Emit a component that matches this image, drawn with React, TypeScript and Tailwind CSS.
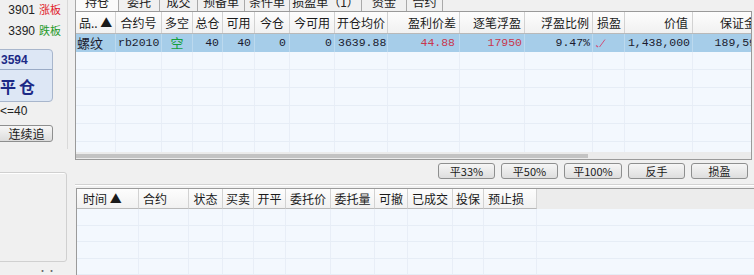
import React from "react";

const cjk = "font-['Noto_Sans_CJK_SC','Noto_Sans',sans-serif]";
const mono = "font-['Liberation_Mono','DejaVu_Sans_Mono',monospace]";

const tabs = [
  { t: "持仓", w: 44, on: true },
  { t: "委托", w: 41 },
  { t: "成交", w: 38 },
  { t: "预备单", w: 47 },
  { t: "条件单", w: 45 },
  { t: "损盈单（1）", w: 72 },
  { t: "资金", w: 45 },
  { t: "合约", w: 36 },
];

// upper grid columns: title, width, header align, cell align
const upperCols = [
  { t: "品.. ▲", w: 40, h: "justify-start pl-[3px]", c: "justify-start pl-[1px]" },
  { t: "合约号", w: 46, h: "justify-center", c: "justify-start pl-[2px]" },
  { t: "多空", w: 31, h: "justify-center", c: "justify-center" },
  { t: "总仓", w: 30, h: "justify-center", c: "justify-end pr-[3px]" },
  { t: "可用", w: 32, h: "justify-center", c: "justify-end pr-[3px]" },
  { t: "今仓", w: 35, h: "justify-center", c: "justify-end pr-[3px]" },
  { t: "今可用", w: 45, h: "justify-center", c: "justify-end pr-[2px]" },
  { t: "开仓均价", w: 53, h: "justify-center", c: "justify-start pl-[3px]" },
  { t: "盈利价差", w: 72, h: "justify-end pr-[3px]", c: "justify-end pr-[4px]" },
  { t: "逐笔浮盈", w: 65, h: "justify-end pr-[3px]", c: "justify-end pr-[2px]" },
  { t: "浮盈比例", w: 68, h: "justify-end pr-[3px]", c: "justify-end pr-[2px]" },
  { t: "损盈", w: 32, h: "justify-start pl-[4px]", c: "justify-start pl-[2px]" },
  { t: "价值", w: 68, h: "justify-end pr-[4px]", c: "justify-end pr-[2px]" },
  { t: "保证金", w: 70, h: "justify-end pr-[6px]", c: "justify-end pr-[6px]" },
];

const lowerCols = [
  { t: "时间 ▲", w: 62, a: "justify-start pl-[6px]" },
  { t: "合约", w: 50, a: "justify-start pl-[4px]" },
  { t: "状态", w: 34, a: "justify-center" },
  { t: "买卖", w: 31, a: "justify-center" },
  { t: "开平", w: 32, a: "justify-center" },
  { t: "委托价", w: 45, a: "justify-center" },
  { t: "委托量", w: 44, a: "justify-center" },
  { t: "可撤", w: 33, a: "justify-center" },
  { t: "已成交", w: 45, a: "justify-center" },
  { t: "投保", w: 31, a: "justify-center" },
  { t: "预止损", w: 53, a: "justify-start pl-[4px]" },
];

function Check() {
  return (
    <svg width="12" height="10" viewBox="0 0 12 10">
      <path d="M1 7.5 L3 9" stroke="#d0507a" strokeWidth="1.2" fill="none" />
      <path d="M4.5 9 L10 1.5" stroke="#d0507a" strokeWidth="1" fill="none" />
    </svg>
  );
}

function row() {
  const cells: React.ReactNode[] = [
    <span className={cjk + " text-[13px] text-[#1b1b2e]"}>螺纹</span>,
    "rb2010",
    <span className={cjk + " text-[13px] text-[#14a03c]"}>空</span>,
    "40",
    "40",
    "0",
    "0",
    "3639.88",
    <span className="text-[#c8374e]">44.88</span>,
    <span className="text-[#c8374e]">17950</span>,
    "9.47%",
    <Check />,
    "1,438,000",
    "189,59",
  ];
  return cells;
}

function Btn({ t, w }: { t: string; w: number }) {
  return (
    <div
      style={{ width: w }}
      className={
        cjk +
        " h-[16px] flex items-center justify-center rounded-[3px] border border-[#8e8f8f] bg-gradient-to-b from-[#f6f6f6] to-[#dedede] text-[11px] leading-none text-[#1a1a1a]"
      }
    >
      {t}
    </div>
  );
}

export default function App() {
  const data = row();
  return (
    <div className={"w-[754px] h-[275px] bg-[#f0f0f0] flex overflow-hidden " + cjk}>
      {/* left side panel */}
      <div className="w-[68px] shrink-0 flex flex-col">
        <div className="h-[150px] border-r border-[#d9d9d9] flex flex-col">
          <div className="flex justify-end items-center pr-[6px] pt-[2px] h-[17px] text-[11px] leading-none">
            <span className="font-['Liberation_Sans',sans-serif] text-[12px] text-[#222]">3901</span>
            <span className="ml-[4px] text-[#e0202a]">涨板</span>
          </div>
          <div className="flex justify-end items-center pr-[6px] mt-[5px] h-[17px] text-[11px] leading-none">
            <span className="font-['Liberation_Sans',sans-serif] text-[12px] text-[#222]">3390</span>
            <span className="ml-[4px] text-[#1f9a2a]">跌板</span>
          </div>
          <div className="-ml-[5px] mt-[10px] w-[58px] h-[53px] rounded-[4px] border border-[#a8b6cc] bg-[#dde7f5] flex flex-col">
            <div className="h-[20px] border-b border-[#9aabc6] flex items-center pl-[5px] font-['Liberation_Sans',sans-serif] text-[12px] font-bold text-[#1c2a86]">
              3594
            </div>
            <div className="flex-1 flex items-center pl-[4px] text-[16px] font-bold tracking-[3px] text-[#1c2a86]">
              平仓
            </div>
          </div>
          <div className="mt-[2px] h-[14px] flex items-center font-['Liberation_Sans',sans-serif] text-[12px] text-[#222]">
            &lt;=40
          </div>
          <div className="-ml-[4px] mt-[7px] w-[57px] h-[17px] rounded-[3px] border border-[#8e8f8f] bg-gradient-to-b from-[#f7f7f7] to-[#dcdcdc] flex items-center justify-center pl-[4px] text-[12px] leading-none text-[#1a1a1a]">
            连续追
          </div>
        </div>
        <div className="-ml-[4px] mt-[23px] w-[71px] h-[91px] rounded-[3px] border border-[#d0d0d0] shadow-[inset_1px_1px_0_#fff]" />
        <div className="flex justify-end pr-[12px] mt-[4px] text-[9px] leading-none text-[#666]">··</div>
      </div>

      {/* main */}
      <div className="ml-[7px] flex-1 flex flex-col">
        {/* tabs */}
        <div className="h-[11px] overflow-hidden flex">
          {tabs.map((tb) => (
            <div
              key={tb.t}
              style={{ width: tb.w }}
              className={
                "h-[11px] flex justify-center border-r border-[#a9a9a9] " +
                (tb.on ? "bg-[#fbfbfb] border-l border-[#a9a9a9]" : "")
              }
            >
              <span className="-mt-[6px] text-[12px] leading-[16px] text-[#222] whitespace-nowrap">{tb.t}</span>
            </div>
          ))}
        </div>

        {/* upper grid */}
        <div className="w-[677px] h-[149px] border border-[#9a9a9a] bg-[#f3f8fe] flex flex-col overflow-hidden">
          <div className="flex-1 overflow-hidden">
            <div className="flex h-[22px] border-b border-[#b9b9b9] bg-gradient-to-b from-[#fdfdfd] to-[#f1f1f1]">
              {upperCols.map((c) => (
                <div
                  key={c.t}
                  style={{ width: c.w }}
                  className={"shrink-0 h-full flex items-center border-r border-[#d2d2d2] text-[12px] text-[#1a1a1a] whitespace-nowrap overflow-hidden " + c.h}
                >
                  {c.t}
                </div>
              ))}
            </div>
            <div className="flex h-[18px] bg-[#a6cde9]">
              {upperCols.map((c, i) => (
                <div
                  key={c.t}
                  style={{ width: c.w }}
                  className={"shrink-0 h-full flex items-center border-r border-[#bcd9ee] whitespace-nowrap overflow-hidden text-[11.5px] text-[#1b1b2e] " + mono + " " + c.c}
                >
                  {data[i]}
                </div>
              ))}
            </div>
            {[0, 1, 2, 3, 4, 5].map((r) => (
              <div key={r} className="flex h-[18px] border-b border-[#e6edf6]">
                {upperCols.map((c) => (
                  <div key={c.t} style={{ width: c.w }} className="shrink-0 h-full border-r border-[#e8eef7]" />
                ))}
              </div>
            ))}
          </div>
          <div className="h-[7px] bg-[#ebebeb] flex items-center">
            <div className="w-[512px] h-[4px] bg-[#c3c3c3]" />
          </div>
        </div>

        {/* action buttons */}
        <div className="mt-[3px] h-[16px] flex justify-end gap-[6px] pr-[6px]">
          <Btn t="平33%" w={57} />
          <Btn t="平50%" w={57} />
          <Btn t="平100%" w={58} />
          <Btn t="反手" w={57} />
          <Btn t="损盈" w={57} />
        </div>
        <div className="mt-[5px] border-t border-[#d2d2d2] border-b border-b-white" />

        {/* lower grid */}
        <div className="mt-[2px] ml-[1px] flex-1 border-l border-t border-[#9a9a9a] bg-[#f3f8fe] flex flex-col overflow-hidden">
          <div className="flex h-[22px] bg-[#ececec]">
            {lowerCols.map((c) => (
              <div
                key={c.t}
                style={{ width: c.w }}
                className={"shrink-0 h-full flex items-center border-r border-b border-[#b9b9b9] border-r-[#d2d2d2] bg-gradient-to-b from-[#fdfdfd] to-[#f1f1f1] text-[12px] text-[#1a1a1a] whitespace-nowrap " + c.a}
              >
                {c.t}
              </div>
            ))}
          </div>
          {[0, 1, 2, 3].map((r) => (
            <div key={r} className="flex h-[18px] border-b border-[#e6edf6]">
              {lowerCols.map((c) => (
                <div key={c.t} style={{ width: c.w }} className="shrink-0 h-full border-r border-[#e8eef7]" />
              ))}
            </div>
          ))}
        </div>
      </div>
    </div>
  );
}
